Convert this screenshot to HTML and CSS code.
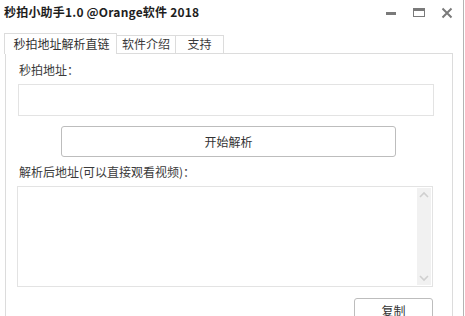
FILE: index.html
```html
<!DOCTYPE html>
<html lang="zh-CN">
<head>
<meta charset="utf-8">
<title>秒拍小助手</title>
<link rel="stylesheet" href="styles.css">
</head>
<body>
<div class="window">
  <div class="titlebar">
    <div class="title">秒拍小助手1.0 @Orange软件 2018</div>
    <div class="controls">
      <svg class="ctl" width="12" height="12" viewBox="0 0 12 12"><rect x="1" y="5" width="10" height="3" fill="#7a7a7a"/></svg>
      <svg class="ctl" width="12" height="12" viewBox="0 0 12 12"><rect x="0.5" y="1.5" width="11" height="8" fill="none" stroke="#7a7a7a" stroke-width="1"/><rect x="0" y="1" width="12" height="3" fill="#7a7a7a"/></svg>
      <svg class="ctl" width="12" height="12" viewBox="0 0 12 12"><path d="M1.5 1.5 L10.5 10.5 M10.5 1.5 L1.5 10.5" stroke="#7a7a7a" stroke-width="2" fill="none"/></svg>
    </div>
  </div>
  <div class="tabs">
    <div class="tab active">秒拍地址解析直链</div>
    <div class="tab">软件介绍</div>
    <div class="tab wide">支持</div>
  </div>
  <div class="panel">
    <div class="label">秒拍地址：</div>
    <div class="input"></div>
    <div class="btn-row"><div class="btn main">开始解析</div></div>
    <div class="label second">解析后地址(可以直接观看视频)：</div>
    <div class="textarea">
      <div class="ta-body"></div>
      <div class="scrollbar">
        <svg width="14" height="10" viewBox="0 0 14 10"><path d="M3 7 L7 3 L11 7" stroke="#cfcfcf" stroke-width="1.6" fill="none"/></svg>
        <svg width="14" height="10" viewBox="0 0 14 10"><path d="M3 3 L7 7 L11 3" stroke="#cfcfcf" stroke-width="1.6" fill="none"/></svg>
      </div>
    </div>
    <div class="copy-row"><div class="btn copy">复制</div></div>
  </div>
</div>
</body>
</html>
```
FILE: styles.css
```css
* { box-sizing: border-box; }
html, body { margin: 0; padding: 0; background: #fff; }
body {
  font-family: "Microsoft YaHei", "Noto Sans CJK SC", "Noto Sans", sans-serif;
  font-size: 12px;
  color: #3a3a3a;
  width: 465px;
  height: 316px;
  overflow: hidden;
}
.window {
  width: 464px;
  height: 316px;
  border-right: 1px solid #b4b4b4;
  display: flex;
  flex-direction: column;
}
.titlebar {
  flex-shrink: 0;
  height: 24px;
  display: flex;
  align-items: center;
  justify-content: space-between;
  padding-left: 4px;
  padding-right: 10px;
}
.title {
  font-weight: bold;
  font-size: 12px;
  letter-spacing: 0.2px;
  color: #1e1e1e;
  line-height: 16px;
}
.controls {
  display: flex;
  align-items: center;
  gap: 16px;
  padding-top: 1px;
}
.ctl { display: block; }
.tabs {
  flex-shrink: 0;
  margin-top: 9px;
  padding-left: 4px;
  display: flex;
  align-items: flex-end;
  position: relative;
  z-index: 1;
}
.tab {
  height: 18px;
  border: 1px solid #dcdcdc;
  border-bottom: none;
  border-left: none;
  padding: 0 5px;
  line-height: 16px;
  background: #fff;
  text-align: center;
}
.tab.active {
  height: 21px;
  border-left: 1px solid #dcdcdc;
  padding: 2px 6px 0 8px;
  width: 113px;
  margin-bottom: -1px;
  color: #333;
}
.tab.wide { width: 48px; }
.panel {
  flex: 1 1 auto;
  min-height: 0;
  margin-left: 5px;
  width: 448px;
  border: 1px solid #dcdcdc;
  border-bottom: none;
  padding: 8px 0 0 12px;
  display: flex;
  flex-direction: column;
}
.panel > * { flex-shrink: 0; }
.label { line-height: 16px; height: 16px; margin-left: 1px; }
.input {
  margin-top: 6px;
  width: 416px;
  height: 32px;
  border: 1px solid #e3e3e3;
}
.btn-row { margin-top: 10px; padding-left: 43px; }
.btn {
  border: 1px solid #bdbdbd;
  border-radius: 3px;
  background: #fff;
  display: flex;
  align-items: center;
  justify-content: center;
  color: #333;
}
.btn.main { width: 335px; height: 31px; }
.label.second { margin-top: 7px; }
.textarea {
  margin-top: 6px;
  margin-left: -1px;
  width: 416px;
  height: 101px;
  border: 1px solid #e3e3e3;
  display: flex;
  padding: 1px;
}
.ta-body { flex: 1; }
.scrollbar {
  width: 14px;
  background: #f1f1f1;
  display: flex;
  flex-direction: column;
  justify-content: space-between;
  padding: 2px 0;
}
.scrollbar svg { display: block; }
.copy-row {
  margin-top: 11px;
  display: flex;
  justify-content: flex-end;
  width: 415px;
}
.btn.copy { width: 79px; height: 26px; align-items: flex-start; padding-top: 3px; }
```
